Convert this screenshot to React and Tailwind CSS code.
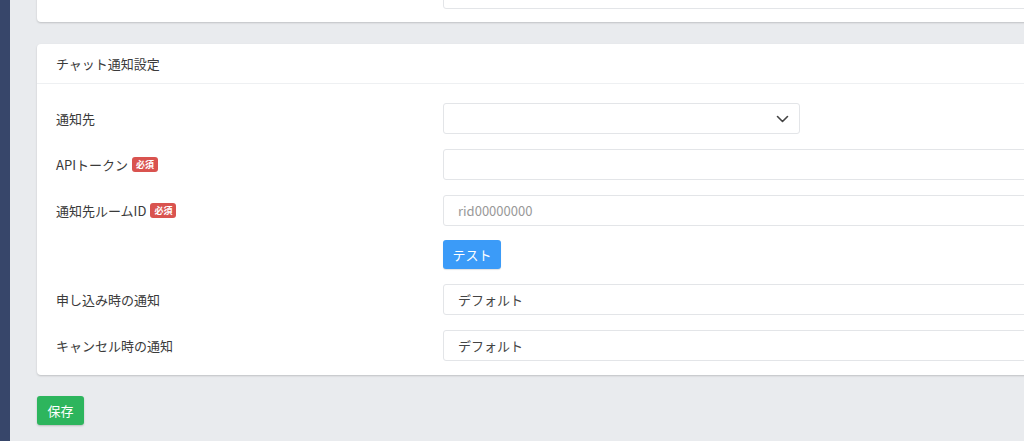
import React from 'react';

const font = { fontFamily: '"Noto Sans CJK JP", "Noto Sans", sans-serif' };

function Badge() {
  return (
    <span className="ml-[4px] inline-flex items-center rounded-[3px] bg-[#d9534f] px-[4px] h-[15px] text-[9px] font-bold text-white leading-none">
      必須
    </span>
  );
}

function Row({ label, required, children }) {
  return (
    <div className="flex items-center h-[31px]">
      <div className="w-[387px] shrink-0 flex items-center text-[13px] text-[#3a3a3a]">
        {label}
        {required && <Badge />}
      </div>
      {children}
    </div>
  );
}

function TextBox({ value, placeholder, className = 'w-[700px]' }) {
  return (
    <div className={`${className} h-[31px] shrink-0 rounded-[3px] border border-[#e3e5e8] bg-white flex items-center px-[14px] text-[13px]`}>
      {value ? <span className="text-[#444]">{value}</span> : <span className="text-[#999]">{placeholder}</span>}
    </div>
  );
}

export default function App() {
  return (
    <div className="w-full h-[441px] overflow-hidden flex bg-[#e9ebee]" style={font}>
      <div className="w-[10px] shrink-0 bg-[#37466a]" />
      <div className="flex-1 pl-[27px] overflow-hidden">
        {/* previous card (cut off) */}
        <div className="w-[1100px] -mt-[32px] rounded-[4px] bg-white shadow-[0_1px_2px_rgba(0,0,0,0.18)] pb-[13px] pt-[10px]">
          <div className="pl-[406px]">
            <TextBox />
          </div>
        </div>

        {/* chat notification card */}
        <div className="w-[1100px] mt-[22px] rounded-[4px] bg-white shadow-[0_1px_2px_rgba(0,0,0,0.18)]">
          <div className="h-[40px] flex items-center px-[19px] border-b border-[#eef0f2] text-[13px] text-[#3a3a3a]">
            チャット通知設定
          </div>
          <div className="pl-[19px] pt-[19px] pb-[14px] flex flex-col gap-[15px]">
            <Row label="通知先">
              <div className="w-[357px] h-[31px] rounded-[3px] border border-[#e3e5e8] bg-white flex items-center justify-end pr-[10px]">
                <svg width="13" height="8" viewBox="0 0 13 8" fill="none" stroke="#444" strokeWidth="1.6" strokeLinecap="round" strokeLinejoin="round">
                  <path d="M1.5 1.5 L6.5 6.5 L11.5 1.5" />
                </svg>
              </div>
            </Row>
            <Row label="APIトークン" required>
              <TextBox />
            </Row>
            <Row label="通知先ルームID" required>
              <TextBox placeholder="rid00000000" />
            </Row>
            <div className="flex h-[29px] -mt-[1px]">
              <div className="w-[387px] shrink-0" />
              <button className="w-[58px] h-[29px] rounded-[3px] bg-[#3b9bf8] text-white text-[13px] shadow-[0_1px_1px_rgba(0,0,0,0.12)]">
                テスト
              </button>
            </div>
            <Row label="申し込み時の通知">
              <TextBox value="デフォルト" />
            </Row>
            <Row label="キャンセル時の通知">
              <TextBox value="デフォルト" />
            </Row>
          </div>
        </div>

        <button className="mt-[21px] w-[47px] h-[29px] rounded-[3px] bg-[#2db55d] text-white text-[13px] shadow-[0_1px_2px_rgba(0,0,0,0.2)]">
          保存
        </button>
      </div>
    </div>
  );
}
